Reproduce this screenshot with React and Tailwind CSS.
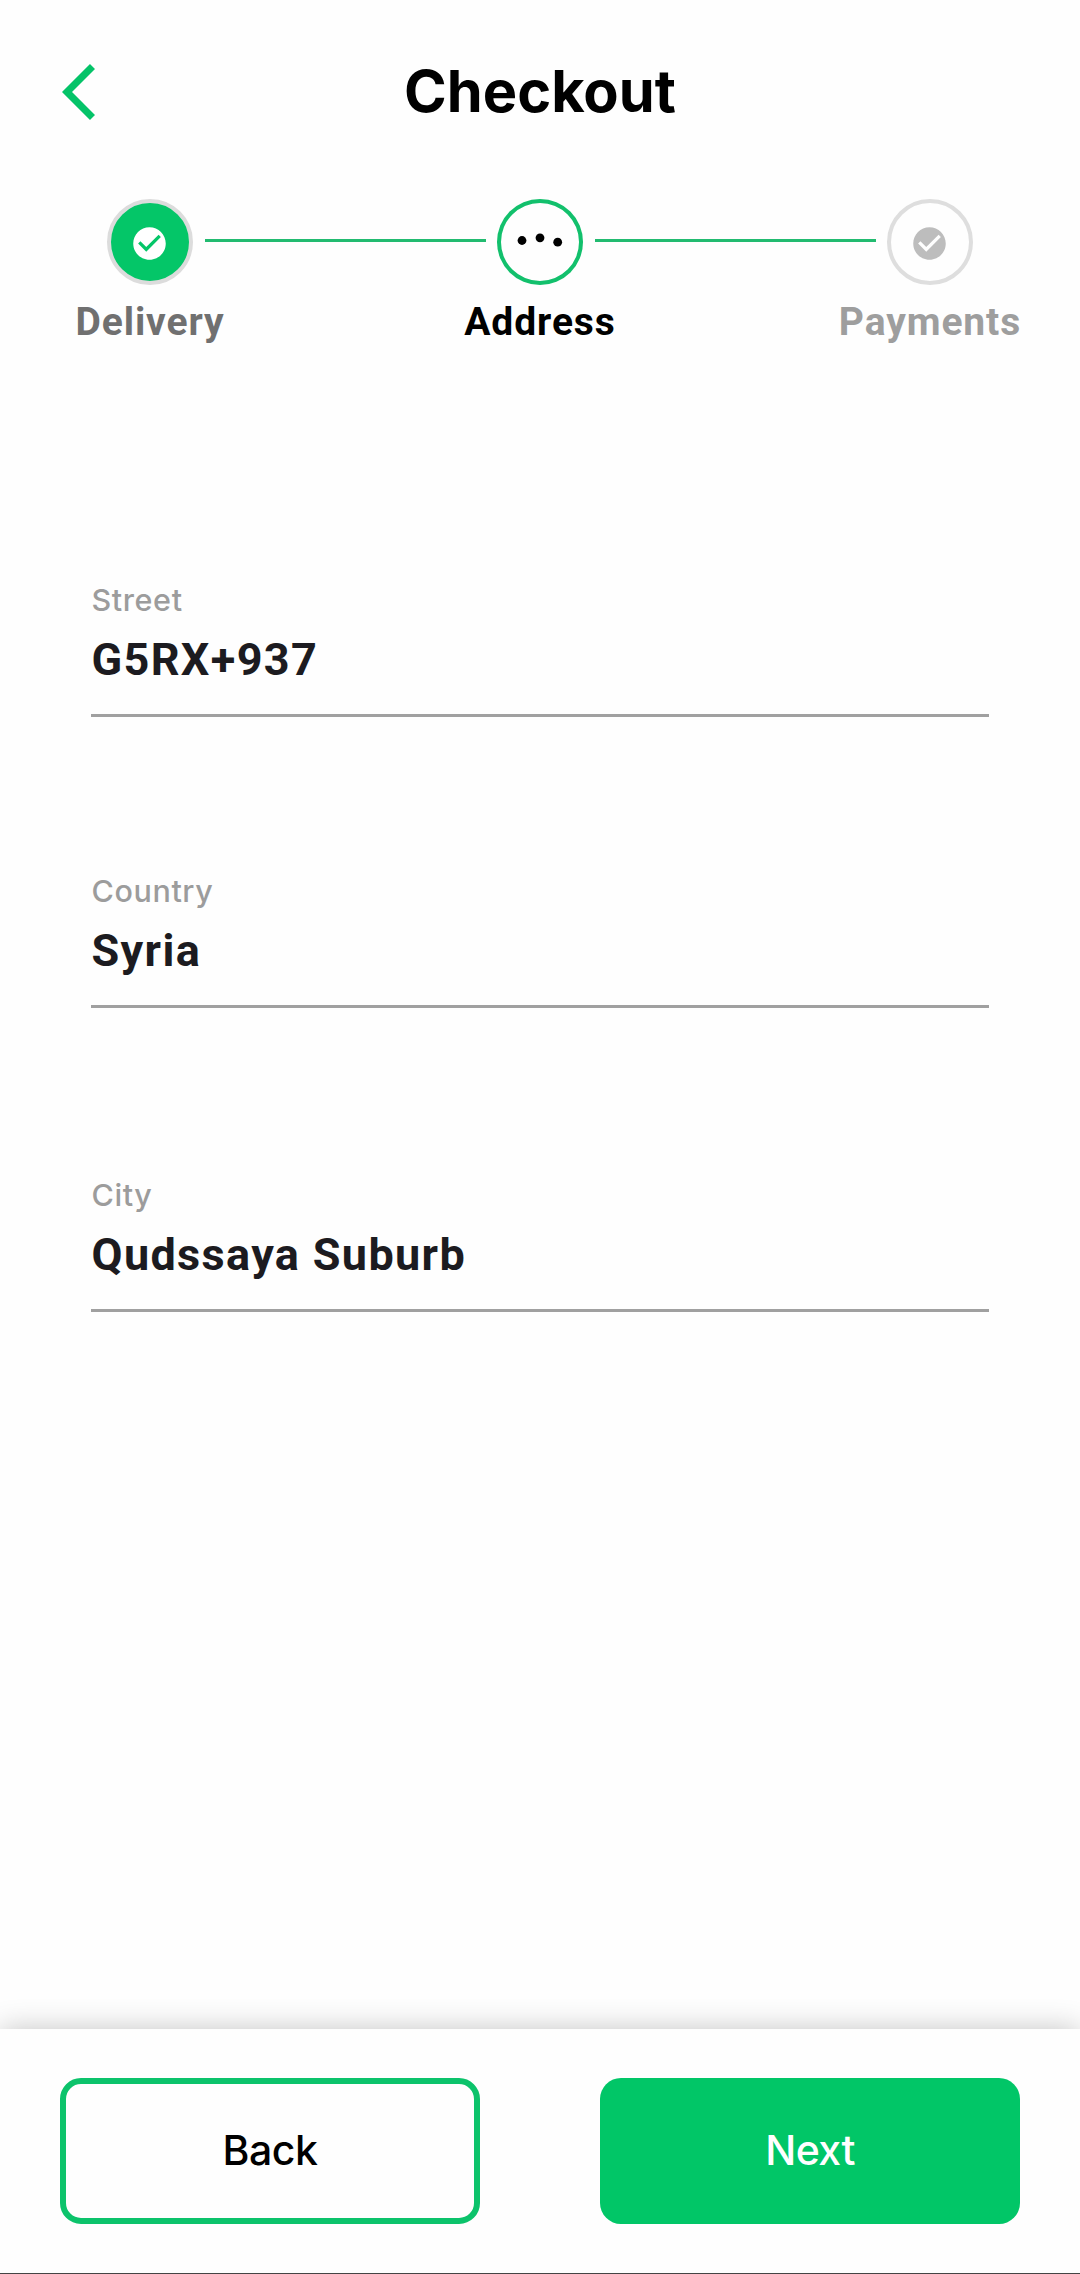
function CheckCircle({ className }) {
  return (
    <svg viewBox="0 0 24 24" className={className} fill="currentColor">
      <path d="M12 2C6.48 2 2 6.48 2 12s4.48 10 10 10 10-4.48 10-10S17.52 2 12 2zm-2 15l-5-5 1.41-1.41L10 14.17l7.59-7.59L19 8l-9 9z" />
    </svg>
  );
}

function Dots() {
  return (
    <svg viewBox="0 0 86 86" className="h-full w-full" fill="#000">
      <circle cx="25" cy="41.5" r="4.4" />
      <circle cx="43" cy="38.8" r="4.4" />
      <circle cx="60.7" cy="43.2" r="4.4" />
    </svg>
  );
}

function Step({ label, circle, labelColor, children }) {
  return (
    <div className="flex w-[86px] shrink-0 flex-col items-center">
      <div className={`flex size-[86px] items-center justify-center rounded-full ${circle}`}>{children}</div>
      <span
        className={`mt-3.5 pt-px font-[Roboto,sans-serif] text-[39px] leading-[45px] font-bold tracking-[0.9px] whitespace-nowrap ${labelColor}`}
      >
        {label}
      </span>
    </div>
  );
}

function Connector() {
  return <div className="mr-[11.5px] ml-[11.5px] mt-[40px] h-[3px] flex-1 bg-[#22bb70]" />;
}

function Field({ label, value, className }) {
  return (
    <div className={`flex flex-col border-b-[3px] border-[#a0a0a0] pb-[34px] ${className}`}>
      <label className="pl-[0.5px] text-[30.5px] leading-10 font-[450] tracking-[0.6px] text-[#9c9c9c]">{label}</label>
      <span className="mt-5 pl-[0.5px] font-[Roboto,sans-serif] text-[45px] leading-10 font-bold tracking-[1.35px] text-[#1c1b20]">
        {value}
      </span>
    </div>
  );
}

export default function App() {
  return (
    <div className="flex h-[2274px] w-[1080px] flex-col overflow-hidden bg-[#fefefe] font-[Inter,sans-serif]">
      <header className="grid h-[181px] grid-cols-[1fr_auto_1fr] items-center">
        <button className="pt-[2px] pl-[62px]" aria-label="Back">
          <svg viewBox="0 2.1 11.67 19.8" className="h-[56px] w-[33px]" fill="#04c368">
            <path d="M11.67 3.87L9.9 2.1 0 12l9.9 9.9 1.77-1.77L3.54 12z" />
          </svg>
        </button>
        <h1 className="text-[57.75px] leading-[64px] font-bold text-black">Checkout</h1>
      </header>

      <div className="flex items-start px-[107px] pt-[18px]">
        <Step label="Delivery" circle="border-4 border-[#dcdcdc] bg-[#04c668]" labelColor="text-[#707070]">
          <CheckCircle className="mt-[2px] mr-px size-[39px] shrink-0 text-white" />
        </Step>
        <Connector />
        <Step label="Address" circle="shadow-[inset_0_0_0_4px_#12c06c]" labelColor="text-black">
          <Dots />
        </Step>
        <Connector />
        <Step label="Payments" circle="border-4 border-[#dedede]" labelColor="text-[#9e9e9e]">
          <CheckCircle className="mt-[2px] mr-px size-[39px] shrink-0 text-[#bdbdbd]" />
        </Step>
      </div>

      <main className="flex flex-1 flex-col px-[91px] pt-[235px]">
        <Field label="Street" value="G5RX+937" />
        <Field label="Country" value="Syria" className="mt-[154px]" />
        <Field label="City" value="Qudssaya Suburb" className="mt-[167px]" />
      </main>

      <footer className="flex h-[245px] shrink-0 items-start justify-between border-b border-[#444] bg-[#fefefe] px-[60px] pt-[49px] shadow-[0_0_28px_rgba(0,0,0,0.23)]">
        <button className="h-[146px] w-[420px] rounded-[21px] border-[6px] border-[#0cc36b] text-[41px] font-medium tracking-[-0.5px] text-black">
          Back
        </button>
        <button className="h-[146px] w-[420px] rounded-[21px] bg-[#01c667] text-[41px] font-medium tracking-[-0.5px] text-white">
          Next
        </button>
      </footer>
    </div>
  );
}
